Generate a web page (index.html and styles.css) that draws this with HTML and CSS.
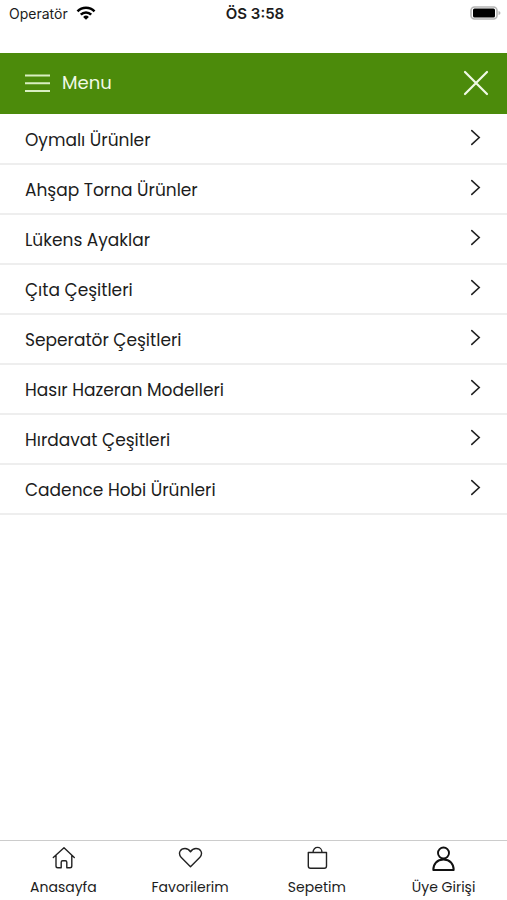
FILE: index.html
```html
<!DOCTYPE html>
<html lang="tr">
<head>
<meta charset="utf-8">
<meta name="viewport" content="width=device-width, initial-scale=1">
<title>Menu</title>
<link rel="stylesheet" href="styles.css">
</head>
<body>
<div class="status">
  <div class="carrier">
    <span>Operatör</span>
    <svg width="20" height="14" viewBox="0 0 20 14" fill="none" stroke="#000" stroke-width="2.6" aria-hidden="true">
      <path d="M1.500 5.300a12 12 0 0 1 17 0"/>
      <path d="M4.800 8.600a7.400 7.400 0 0 1 10.400 0"/>
      <path d="M10 13.800 7.100 10.900a4.100 4.100 0 0 1 5.800 0z" fill="#000" stroke="none"/>
    </svg>
  </div>
  <div class="clock">ÖS 3:58</div>
  <svg class="battery" width="31" height="14" viewBox="0 0 31 14" aria-hidden="true">
    <rect x="1" y="1" width="26" height="12" rx="3.5" fill="#fff" stroke="#b5b5b5" stroke-width="1.6"/>
    <rect x="3" y="2.500" width="22" height="9" rx="1.5" fill="#000"/>
    <path d="M28.500 5v4q2-.7 2-2t-2-2z" fill="#b5b5b5"/>
  </svg>
</div>
<header class="bar">
  <svg width="25" height="20" viewBox="0 0 25 20" stroke="#d9efc2" stroke-width="2" aria-hidden="true">
    <path d="M0 2.500h25M0 10.300h25M0 18h25"/>
  </svg>
  <h1>Menu</h1>
  <button class="close" type="button" aria-label="Kapat">
    <svg width="26" height="26" viewBox="0 0 26 26" stroke="#f1fae6" stroke-width="2.200" stroke-linecap="round" aria-hidden="true">
      <path d="M2 2l22 22M24 2 2 24"/>
    </svg>
  </button>
</header>
<main>
  <ul class="list">
    <li><a href="#"><span>Oymalı Ürünler</span><svg class="chev" viewBox="0 0 10 16"><path d="M1.500 1.500 8.500 8l-7 6.500"/></svg></a></li>
    <li><a href="#"><span>Ahşap Torna Ürünler</span><svg class="chev" viewBox="0 0 10 16"><path d="M1.500 1.500 8.500 8l-7 6.500"/></svg></a></li>
    <li><a href="#"><span>Lükens Ayaklar</span><svg class="chev" viewBox="0 0 10 16"><path d="M1.500 1.500 8.500 8l-7 6.500"/></svg></a></li>
    <li><a href="#"><span>Çıta Çeşitleri</span><svg class="chev" viewBox="0 0 10 16"><path d="M1.500 1.500 8.500 8l-7 6.500"/></svg></a></li>
    <li><a href="#"><span>Seperatör Çeşitleri</span><svg class="chev" viewBox="0 0 10 16"><path d="M1.500 1.500 8.500 8l-7 6.500"/></svg></a></li>
    <li><a href="#"><span>Hasır Hazeran Modelleri</span><svg class="chev" viewBox="0 0 10 16"><path d="M1.500 1.500 8.500 8l-7 6.500"/></svg></a></li>
    <li><a href="#"><span>Hırdavat Çeşitleri</span><svg class="chev" viewBox="0 0 10 16"><path d="M1.500 1.500 8.500 8l-7 6.500"/></svg></a></li>
    <li><a href="#"><span>Cadence Hobi Ürünleri</span><svg class="chev" viewBox="0 0 10 16"><path d="M1.500 1.500 8.500 8l-7 6.500"/></svg></a></li>
  </ul>
</main>
<nav class="tabs">
  <a href="#">
    <svg class="icon" viewBox="0 0 26 26"><path d="M3.300 12.500 14 2.800l10.300 9.700M6 10.500V21q0 1.800 1.800 1.800h3.400v-5.600q0-1.500 1.500-1.500h2.600q1.500 0 1.500 1.500v5.600h3.200q1.800 0 1.800-1.800V10.500"/></svg>
    <span>Anasayfa</span>
  </a>
  <a href="#">
    <svg class="icon" viewBox="0 0 26 26"><path d="M13.500 21.800 4.300 12.600C.3 7.800 3.700 3.500 8 3.500c2.500 0 4.300 1.300 5.500 3.300 1.200-2 3-3.300 5.500-3.300 4.300 0 7.700 4.300 3.700 9.100z"/></svg>
    <span>Favorilerim</span>
  </a>
  <a href="#">
    <svg class="icon" viewBox="0 0 26 26"><path d="M4.300 7.500h18.200v13.500q0 2.200-2.200 2.200H6.500q-2.200 0-2.200-2.200zM9 7.500c0-6.800 9-6.800 9 0"/></svg>
    <span>Sepetim</span>
  </a>
  <a href="#">
    <svg class="icon user" viewBox="0 0 26 26"><circle cx="12.500" cy="8" r="5.500"/><path d="M2.300 25c0-6 3.700-10.500 10.200-10.500s10.200 4.500 10.200 10.500z"/></svg>
    <span>Üye Girişi</span>
  </a>
</nav>
</body>
</html>
```
FILE: styles.css
```css
* {
  box-sizing: border-box;
}

body {
  margin: 0;
  min-height: 100vh;
  display: flex;
  flex-direction: column;
  background: #fff;
  color: #1c1c1c;
  font-family: Poppins, Inter, "Open Sans", sans-serif;
}

a {
  color: inherit;
  text-decoration: none;
}

.status {
  display: grid;
  grid-template-columns: 1fr auto 1fr;
  align-items: start;
  height: 53px;
  padding: 4px 6px 0 9px;
  font: 14px/20px Inter, sans-serif;
}

.carrier {
  display: flex;
  align-items: center;
  gap: 8px;
}

.carrier svg {
  margin-bottom: 2px;
}

.clock {
  font-size: 15px;
  font-weight: 600;
}

.battery {
  justify-self: end;
  margin-top: 2px;
}

.bar {
  display: flex;
  align-items: center;
  height: 61px;
  padding: 0 18px 2px 25px;
  background: #4c8b0b;
  color: #f1fae6;
}

.bar h1 {
  flex: 1;
  margin: 0 0 0 12px;
  font-size: 18px;
  font-weight: 400;
}

.close {
  display: flex;
  padding: 0;
  border: 0;
  background: none;
}

main {
  flex: 1;
}

.list {
  margin: 0;
  padding: 1px 0 0;
  list-style: none;
}

.list li {
  border-bottom: 2px solid #eee;
}

.list a {
  display: flex;
  align-items: center;
  justify-content: space-between;
  height: 48px;
  padding: 2px 26px 0 25px;
  font-size: 17px;
}

.chev {
  width: 11px;
  height: 17px;
  margin-bottom: 6px;
}

.chev path {
  fill: none;
  stroke: #222;
  stroke-width: 1.5;
  stroke-linecap: round;
}

.tabs {
  display: grid;
  grid-template-columns: repeat(4, 1fr);
  height: 60px;
  border-top: 1px solid #ccc;
}

.tabs a {
  display: flex;
  flex-direction: column;
  align-items: center;
  padding-top: 4px;
  font-size: 14px;
  line-height: 20px;
}

.tabs span {
  margin-top: 6px;
}

.icon {
  width: 26px;
  height: 26px;
  fill: none;
  stroke: #222;
  stroke-width: 1.4;
  stroke-linejoin: round;
  stroke-linecap: round;
}

.icon.user {
  stroke: #111;
  stroke-width: 1.9;
}
```
